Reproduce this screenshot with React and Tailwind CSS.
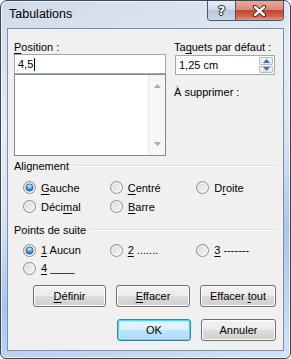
import React from "react";

function Radio({ checked }) {
  return (
    <svg width="13" height="13" viewBox="0 0 13 13" className="shrink-0">
      <defs>
        <linearGradient id="rb" x1="0" y1="0" x2="1" y2="1">
          <stop offset="0" stopColor="#d6d6d6" />
          <stop offset="1" stopColor="#f8f8f8" />
        </linearGradient>
        <linearGradient id="rd" x1="0" y1="0" x2="0" y2="1">
          <stop offset="0" stopColor="#a8dcfa" />
          <stop offset="1" stopColor="#1d6fb8" />
        </linearGradient>
      </defs>
      <circle cx="6.5" cy="6.5" r="6" fill="url(#rb)" stroke="#8f8f8f" strokeWidth="1" />
      <circle cx="6.5" cy="6.5" r="4.5" fill="none" stroke="#ffffff" strokeWidth="0.8" opacity="0.8" />
      {checked && (
        <>
          <circle cx="6.5" cy="6.5" r="3.6" fill="url(#rd)" stroke="#1c4f7d" strokeWidth="0.8" />
          <circle cx="6.5" cy="5.6" r="1.3" fill="#c9ecff" opacity="0.8" />
        </>
      )}
    </svg>
  );
}

function RadioItem({ checked, children }) {
  return (
    <div className="flex items-center w-[87px]">
      <Radio checked={checked} />
      <span className="ml-[5px]">{children}</span>
    </div>
  );
}

function Heading({ children }) {
  return (
    <div className="flex items-center h-[14px] pl-[6px] pr-[7px]">
      <span>{children}</span>
      <div className="flex-1 ml-[5px] h-[2px] border-t border-[#d5dfe5] border-b-white border-b" />
    </div>
  );
}

function Btn({ w, def, children }) {
  return (
    <div
      className={
        "h-[22px] rounded-[3px] border flex items-center justify-center " +
        w +
        (def
          ? " border-[#3c7fb1] bg-[linear-gradient(#eaf6fd_0%,#d9f0fc_50%,#bee6fd_50%,#a7d9f5_100%)] shadow-[inset_0_0_0_1px_#48d8fb,inset_0_0_0_2px_#bde9fa]"
          : " border-[#707070] bg-[linear-gradient(#f2f2f2_0%,#ebebeb_50%,#dddddd_50%,#cfcfcf_100%)] shadow-[inset_0_0_0_1px_#fcfcfc]")
      }
    >
      <span>{children}</span>
    </div>
  );
}

export default function App() {
  return (
    <div className="w-[291px] h-[359px] font-['Liberation_Sans',Arial,sans-serif] text-[11px] leading-[14px] text-black">
      <div className="w-full h-full rounded-t-[7px] rounded-b-[6px] border border-[#3e4855] bg-[linear-gradient(165deg,#cfdbe8_0%,#e4ecf5_30%,#d6e4f3_50%,#a8c7ec_70%,#bcd5f1_85%,#d3e4f6_100%)] shadow-[inset_0_0_0_1px_rgba(255,255,255,0.6)] flex flex-col">
        <div className="h-[27px] flex items-start">
          <span className="pl-[8px] pt-[6px] text-[12.5px] leading-[15px] text-[#000]">Tabulations</span>
          <div className="ml-auto mr-[6px] flex h-[20px] rounded-b-[4px] border border-t-0 border-[#4b5565] overflow-hidden">
            <div className="w-[28px] h-full flex items-center justify-center bg-[linear-gradient(#e6ecf3_0%,#d3dde9_45%,#b9c8d8_50%,#c9d7e6_100%)] border-r border-[#4b5565]">
              <span className="font-['DejaVu_Sans',sans-serif] font-bold text-[13px] leading-[13px] text-white [text-shadow:0_0_1px_#222,0_0_1px_#222,1px_0_0_#333,-1px_0_0_#333,0_1px_0_#333,0_-1px_0_#333]">?</span>
            </div>
            <div className="w-[47px] h-full flex items-center justify-center bg-[linear-gradient(#e9a99b_0%,#d98a79_45%,#c3462f_50%,#d2624a_80%,#e39a7c_100%)]">
              <svg width="15" height="12" viewBox="0 0 15 12">
                <path d="M3 2 L12 10 M12 2 L3 10" stroke="#3a1a14" strokeWidth="4.2" strokeLinecap="round" />
                <path d="M3 2 L12 10 M12 2 L3 10" stroke="#ffffff" strokeWidth="2.4" strokeLinecap="round" />
              </svg>
            </div>
          </div>
        </div>
        <div className="mx-[6px] h-[323px] border border-[#7d8fa6] bg-[#f0f0f0] flex flex-col pt-[11px]">
          <div className="flex pl-[6px] pr-[8px]">
            <div className="w-[152px] flex flex-col">
              <div className="h-[14px]">
                <u className="underline-offset-[2px]">P</u>osition :
              </div>
              <div className="h-[20px] border border-[#a3a7af] bg-white flex items-center pl-[3px]">
                <span>4,5</span>
                <span className="w-[1px] h-[13px] bg-black ml-[1px]" />
              </div>
              <div className="h-[82px] border border-[#828790] bg-white flex justify-end">
                <div className="w-[17px] h-full bg-[#f6f6f6] border-l border-[#e8e8e8] flex flex-col items-center justify-between py-[9px]">
                  <svg width="7" height="4" viewBox="0 0 7 4"><path d="M3.5 0 L7 4 L0 4 Z" fill="#a9a9a9" /></svg>
                  <svg width="7" height="4" viewBox="0 0 7 4"><path d="M0 0 L7 0 L3.5 4 Z" fill="#a9a9a9" /></svg>
                </div>
              </div>
            </div>
            <div className="ml-[9px] flex-1 flex flex-col">
              <div className="h-[14px] -ml-[1px]">
                Ta<u className="underline-offset-[2px]">q</u>uets par défaut :
              </div>
              <div className="mt-[1px] h-[20px] border border-[#a3a7af] bg-white flex items-center pl-[3px]">
                <span>1,25 cm</span>
                <div className="ml-auto mr-[1px] w-[14px] h-[16px] flex flex-col gap-[1px]">
                  <div className="h-[7.5px] flex-1 border border-[#b5bcc7] rounded-[1px] bg-[linear-gradient(#f3f6fa,#dde5ee)] flex items-center justify-center">
                    <svg width="7" height="4" viewBox="0 0 7 4"><path d="M3.5 0 L7 4 L0 4 Z" fill="#4b6ea3" /></svg>
                  </div>
                  <div className="h-[7.5px] flex-1 border border-[#b5bcc7] rounded-[1px] bg-[linear-gradient(#f3f6fa,#dde5ee)] flex items-center justify-center">
                    <svg width="7" height="4" viewBox="0 0 7 4"><path d="M0 0 L7 0 L3.5 4 Z" fill="#4b6ea3" /></svg>
                  </div>
                </div>
              </div>
              <div className="mt-[10px] h-[14px] -ml-[1px]">À supprimer :</div>
            </div>
          </div>

          <div className="mt-[3px]">
            <Heading>Alignement</Heading>
          </div>
          <div className="mt-[5px] pl-[15px]">
            <div className="flex h-[19px] items-center">
              <RadioItem checked><u className="underline-offset-[2px]">G</u>auche</RadioItem>
              <RadioItem><u className="underline-offset-[2px]">C</u>entré</RadioItem>
              <RadioItem>D<u className="underline-offset-[2px]">r</u>oite</RadioItem>
            </div>
            <div className="flex h-[19px] items-center">
              <RadioItem>Déci<u className="underline-offset-[2px]">m</u>al</RadioItem>
              <RadioItem><u className="underline-offset-[2px]">B</u>arre</RadioItem>
            </div>
          </div>

          <div className="mt-[7px]">
            <Heading>Points de suite</Heading>
          </div>
          <div className="mt-[4px] pl-[15px]">
            <div className="flex h-[18px] items-center">
              <RadioItem checked><u className="underline-offset-[2px]">1</u> Aucun</RadioItem>
              <RadioItem><u className="underline-offset-[2px]">2</u> .......</RadioItem>
              <RadioItem><u className="underline-offset-[2px]">3</u> -------</RadioItem>
            </div>
            <div className="flex h-[18px] items-center">
              <RadioItem><u className="underline-offset-[2px]">4</u> ____</RadioItem>
            </div>
          </div>

          <div className="mt-[8px] flex pl-[25px] gap-[10px]">
            <Btn w="w-[73px]"><u className="underline-offset-[2px]">D</u>éfinir</Btn>
            <Btn w="w-[74px]"><u className="underline-offset-[2px]">E</u>ffacer</Btn>
            <Btn w="w-[76px]">Effacer <u className="underline-offset-[2px]">t</u>out</Btn>
          </div>
          <div className="mt-[12px] flex justify-end pr-[7px] gap-[10px]">
            <Btn w="w-[74px]" def>OK</Btn>
            <Btn w="w-[75px]">Annuler</Btn>
          </div>
        </div>
      </div>
    </div>
  );
}
